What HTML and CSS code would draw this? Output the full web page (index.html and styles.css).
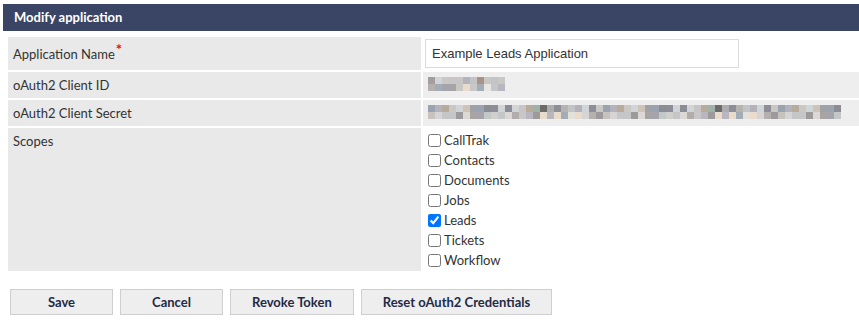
FILE: index.html
```html
<!DOCTYPE html>
<html lang="en">
<head>
<meta charset="UTF-8">
<title>Modify application</title>
<link rel="stylesheet" href="styles.css">
</head>
<body>
    <div class="page">
        <div class="titlebar">Modify application</div>
        <table class="form">
            <tr>
                <td class="label mid">Application Name<span class="req">*</span></td>
                <td class="value tight"><input type="text" class="text-input" value="Example Leads Application"></td>
            </tr>
            <tr>
                <td class="label mid">oAuth2 Client ID</td>
                <td class="value grey"><div class="blur" data-cols="11" data-seed="3"></div></td>
            </tr>
            <tr>
                <td class="label mid">oAuth2 Client Secret</td>
                <td class="value grey"><div class="blur" data-cols="59" data-seed="7"></div></td>
            </tr>
            <tr>
                <td class="label">Scopes</td>
                <td class="value scopes">
                    <label class="scope"><input type="checkbox"><span>CallTrak</span></label>
                    <label class="scope"><input type="checkbox"><span>Contacts</span></label>
                    <label class="scope"><input type="checkbox"><span>Documents</span></label>
                    <label class="scope"><input type="checkbox"><span>Jobs</span></label>
                    <label class="scope"><input type="checkbox" checked><span>Leads</span></label>
                    <label class="scope"><input type="checkbox"><span>Tickets</span></label>
                    <label class="scope"><input type="checkbox"><span>Workflow</span></label>
                </td>
            </tr>
        </table>
        <div class="actions">
            <button class="btn btn-narrow">Save</button>
            <button class="btn btn-narrow">Cancel</button>
            <button class="btn">Revoke Token</button>
            <button class="btn">Reset oAuth2 Credentials</button>
        </div>
    </div>
    <script>
        // blurred placeholder for hidden credentials
        var topRow = ['#cfc3b6', '#8d8e97', '#b4b3bd', '#a39e9f', '#adadad', '#c7c5c6', '#8b8c96', '#c9c8c4', '#b5b4ae', '#d1d5d8', '#c3c4c8', '#9fa3a8', '#7f7f92', '#b9ab9a', '#9aa4b0', '#a99386', '#9eb2aa', '#6e6a6c'];
        var bottomRow = ['#e9dccd', '#a5a4ad', '#b8b7c0', '#a9a4a4', '#cfcfcc', '#b2acaa', '#c6c3bf', '#9c9a9b', '#a3adb6', '#c4c6c8', '#e2e2da', '#d7d4d6', '#c9c6c8', '#dbd8d6', '#b5b0ae', '#ccd2d6', '#e8e6e2'];

        document.querySelectorAll('.blur').forEach(function (el) {
            var cols = parseInt(el.dataset.cols, 10);
            var seed = parseInt(el.dataset.seed, 10);
            for (var r = 0; r < 2; r++) {
                var palette = r === 0 ? topRow : bottomRow;
                for (var c = 0; c < cols; c++) {
                    var cell = document.createElement('span');
                    seed = (seed * 37 + 11) % 101;
                    cell.style.background = palette[seed % palette.length];
                    el.appendChild(cell);
                }
            }
            el.style.gridTemplateColumns = 'repeat(' + cols + ', 7px)';
        });
    </script>
</body>
</html>
```

FILE: styles.css
```css
/* Modify application form */
body {
    margin: 0;
    background-color: #fff;
    font-family: Lato, "Open Sans", sans-serif;
    font-size: 13px;
    color: #333;
}

.page {
    width: 856px;
    padding: 4px 0 0 3px;
    overflow: hidden; /* form is wider than the window, clip it at the edge */
}

.titlebar {
    height: 27px;
    line-height: 27px;
    padding-left: 11px;
    background-color: #3a4566;
    color: #fff;
    font-weight: bold;
}

.form {
    margin: 4px 0 0 3px;
    border-spacing: 2px;
    width: 890px;
}

.form td {
    padding: 5px;
    line-height: 16px;
    vertical-align: top;
}

.form td.mid {
    vertical-align: middle;
}

.label {
    width: 403px;
    background-color: #e9e9e9;
}

.req {
    color: #e01010;
    font-size: 15px;
    font-weight: bold;
    position: relative;
    top: -4px;
    margin-left: 1px;
}

.value.grey {
    background-color: #eee;
}

.form td.tight {
    padding: 2px;
}

.text-input {
    display: block;
    box-sizing: border-box;
    width: 314px;
    height: 29px;
    margin: 0;
    padding: 0 6px;
    border: 1px solid #dcdcdc;
    font-family: "Liberation Sans", Arial, sans-serif;
    font-size: 13px;
    color: #333;
    outline: none;
}

.blur {
    display: grid;
    grid-auto-rows: 7px;
    width: max-content;
}

.form td.scopes {
    padding: 2px 5px 1px;
}

.scope {
    display: flex;
    align-items: center;
    height: 20px;
}

.scope input {
    width: 13px;
    height: 13px;
    margin: 0 3px 0 0;
}

.actions {
    display: flex;
    gap: 7px;
    margin: 16px 0 0 7px;
}

.btn {
    height: 26px;
    padding: 0 21px;
    border: 1px solid #cfcfcf;
    background-color: #eee;
    font-family: Lato, sans-serif;
    font-size: 13px;
    font-weight: bold;
    color: #232a45;
}

.btn-narrow {
    min-width: 103px;
}
```
